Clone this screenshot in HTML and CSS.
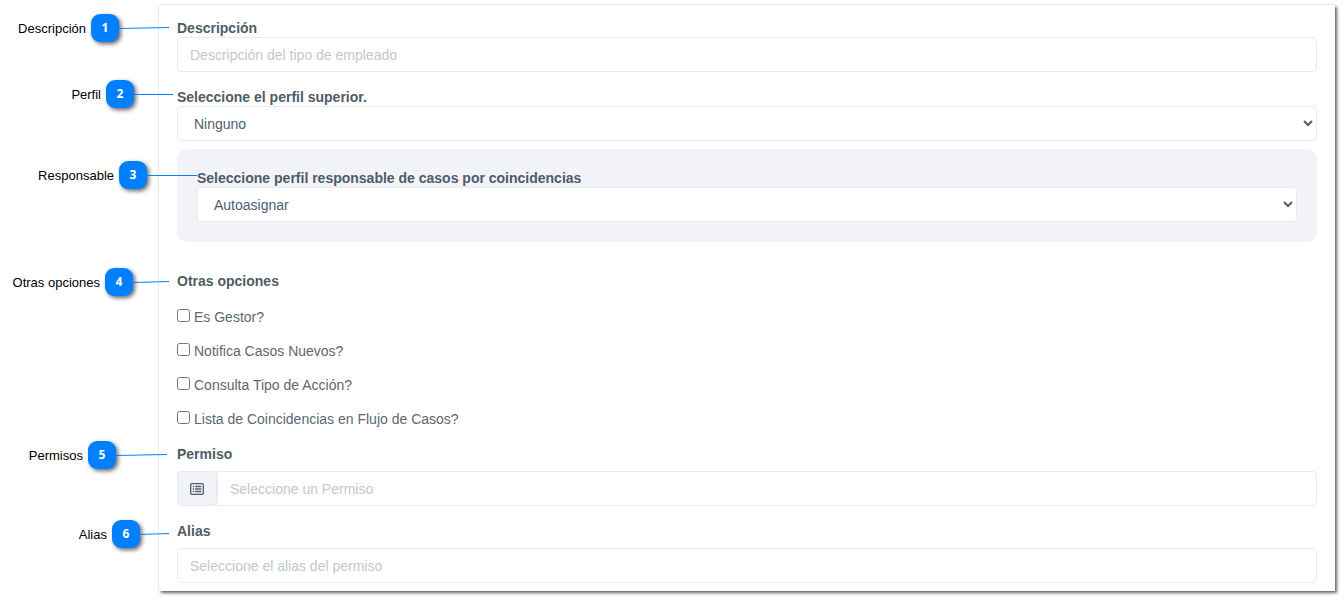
FILE: index.html
```html
<!DOCTYPE html>
<html lang="es">
<head>
  <meta charset="UTF-8">
  <meta name="viewport" content="width=device-width, initial-scale=1.0">
  <title>Tipo de empleado</title>
  <link rel="stylesheet" href="styles.css">
</head>
<body>
  <form class="panel">
    <div class="group">
      <label class="title" for="descripcion">Descripción</label>
      <input class="control" type="text" id="descripcion" placeholder="Descripción del tipo de empleado">
      <div class="callout">
        <span>Descripción</span>
        <b class="badge">1</b>
        <svg class="line" width="50" height="2"><path d="M0 1.5L50 .5"/></svg>
      </div>
    </div>

    <div class="group">
      <label class="title" for="perfil">Seleccione el perfil superior.</label>
      <select class="control" id="perfil">
        <option>Ninguno</option>
      </select>
      <div class="callout callout-high callout-near">
        <span>Perfil</span>
        <b class="badge">2</b>
        <svg class="line" width="39" height="2"><path d="M0 1.5H39"/></svg>
      </div>
    </div>

    <div class="box">
      <div class="group">
        <label class="title" for="responsable">Seleccione perfil responsable de casos por coincidencias</label>
        <select class="control" id="responsable">
          <option>Autoasignar</option>
        </select>
        <div class="callout callout-high callout-touch">
          <span>Responsable</span>
          <b class="badge">3</b>
          <svg class="line" width="50" height="2"><path d="M0 1.5H50"/></svg>
        </div>
      </div>
    </div>

    <div class="group options">
      <div class="title">Otras opciones</div>
      <div class="checks">
        <label class="check"><input type="checkbox">Es Gestor?</label>
        <label class="check"><input type="checkbox">Notifica Casos Nuevos?</label>
        <label class="check"><input type="checkbox">Consulta Tipo de Acción?</label>
        <label class="check"><input type="checkbox">Lista de Coincidencias en Flujo de Casos?</label>
      </div>
      <div class="callout">
        <span>Otras opciones</span>
        <b class="badge">4</b>
        <svg class="line" width="36" height="2"><path d="M0 1.5L36 .5"/></svg>
      </div>
    </div>

    <div class="group spaced">
      <label class="title" for="permiso">Permiso</label>
      <div class="input-group">
        <span class="addon">
          <svg width="14" height="14" viewBox="0 0 14 14">
            <rect x=".7" y="1.7" width="12.6" height="10.6" rx="1"/>
            <path d="M2.8 4.5h1.4M2.8 7h1.4M2.8 9.5h1.4M5.2 4.5h6M5.2 7h6M5.2 9.5h6"/>
          </svg>
        </span>
        <input class="control" type="text" id="permiso" placeholder="Seleccione un Permiso">
      </div>
      <div class="callout">
        <span>Permisos</span>
        <b class="badge">5</b>
        <svg class="line" width="53" height="2"><path d="M0 1.5L51 .5"/></svg>
      </div>
    </div>

    <div class="group spaced">
      <label class="title" for="alias">Alias</label>
      <input class="control" type="text" id="alias" placeholder="Seleccione el alias del permiso">
      <div class="callout callout-low">
        <span>Alias</span>
        <b class="badge">6</b>
        <svg class="line" width="29" height="2"><path d="M0 1.5L29 .5"/></svg>
      </div>
    </div>
  </form>
</body>
</html>
```

FILE: styles.css
```css
* {
  box-sizing: border-box;
}
body {
  margin: 0;
  padding: 5px 9px 9px 159px;
  background-color: #fff;
  font-family: "Liberation Sans", Arial, sans-serif;
  font-size: 14px;
  color: #4f5d73;
}
.panel {
  padding: 14px 18px 8px;
  background-color: #fff;
  box-shadow: 0 0 2px rgba(0, 0, 0, 0.15), 2px 2px 3px rgba(0, 0, 0, 0.6);
}
.group {
  position: relative;
  margin-bottom: 16px;
}
.group:last-child {
  margin-bottom: 0;
}
.title {
  display: block;
  line-height: 18px;
  font-weight: bold;
  color: #4f5b66;
}
.spaced .title {
  margin-bottom: 8px;
}
.control {
  display: block;
  width: 100%;
  height: 35px;
  padding: 0 12px;
  border: 1px solid #e8eaed;
  border-radius: 4px;
  background-color: #fff;
  font: inherit;
  color: #5c6873;
}
select.control {
  color: #4f5d73;
}
.control::placeholder {
  color: #c4c7cb;
  opacity: 1;
}

/* caja gris del responsable */
.box {
  margin: -8px 0 30px;
  padding: 20px;
  border-radius: 10px;
  background-color: #f2f3f8;
}

.options {
  margin-bottom: 9px;
}
.checks {
  padding-top: 10px;
}
.check {
  display: flex;
  align-items: center;
  gap: 4px;
  height: 34px;
  color: #5c6873;
}
.check input {
  width: 13px;
  height: 13px;
  margin: 0 0 3px;
}

.input-group {
  display: flex;
}
.addon {
  display: flex;
  flex: none;
  align-items: center;
  justify-content: center;
  width: 40px;
  border: 1px solid #e8eaed;
  border-radius: 4px;
  background-color: #f2f3f8;
}
.addon svg {
  fill: none;
  stroke: #4f5d73;
  stroke-width: 1.3;
}
.input-group .control {
  flex: 1;
  border-top-left-radius: 0;
  border-bottom-left-radius: 0;
}

/* etiquetas numeradas fuera del panel */
.callout {
  position: absolute;
  top: -4px;
  right: 100%;
  display: flex;
  align-items: center;
  margin-right: 8px;
  font-size: 13px;
  white-space: nowrap;
  color: #000;
}
.callout-high {
  top: -8px;
}
.callout-low {
  top: -2px;
}
.callout-near {
  margin-right: 4px;
}
.callout-touch {
  margin-right: 0;
}
.group:first-child > .callout:not(.callout-touch) {
  top: -5px;
}
.badge {
  width: 28px;
  height: 28px;
  margin-left: 5px;
  border-radius: 9px;
  background-color: #0080ff;
  box-shadow: 2px 2px 4px rgba(0, 0, 0, 0.6);
  font: bold 12px/28px "Open Sans", sans-serif;
  text-align: center;
  color: #fff;
}
.line {
  position: relative;
  fill: none;
  stroke: #0080ff;
}
```
